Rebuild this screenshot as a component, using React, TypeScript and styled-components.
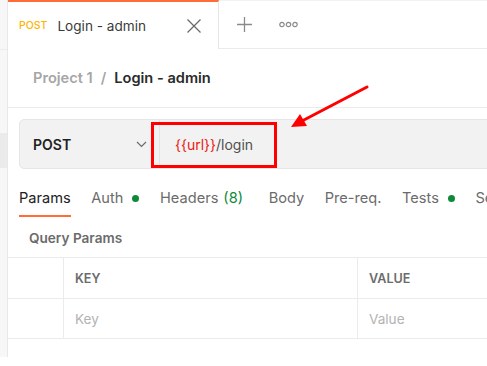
import React from "react";
import styled, { createGlobalStyle } from "styled-components";

const Global = createGlobalStyle`
  html, body { margin: 0; padding: 0; background: #ffffff; }
  body { font-family: Inter, "Noto Sans", sans-serif; overflow: hidden; width: 487px; height: 366px; }
`;

const Page = styled.div`
  position: relative;
  display: flex;
  width: 487px;
  height: 357px;
  overflow: hidden;
`;

const Sidebar = styled.div`
  width: 7px;
  flex: none;
  background: #f7f7f7;
  border-right: 1px solid #e8e8e8;
  display: flex;
  flex-direction: column;
`;

const SidebarTop = styled.div`
  height: 49px;
  border-bottom: 1px solid #ececec;
`;

const SidebarPatch = styled.div`
  margin-top: 83px;
  height: 35px;
  background: #ebebeb;
`;

const Main = styled.div`
  flex: 1;
  min-width: 0;
  display: flex;
  flex-direction: column;
  overflow: hidden;
`;

const TabBar = styled.div`
  display: flex;
  height: 49px;
  flex: none;
`;

const ActiveTab = styled.div`
  width: 211px;
  flex: none;
  display: flex;
  align-items: center;
  padding: 0 16px 0 11px;
  box-sizing: border-box;
  border-top: 2px solid #ff6c37;
  border-right: 1px solid #e6e6e6;
  background: #fff;
`;

const TabMethod = styled.span`
  color: #ffb400;
  font-size: 10.5px;
  font-weight: 500;
  margin-right: 10px;
`;

const TabTitle = styled.span`
  color: #3a3a3a;
  font-size: 13.6px;
  flex: 1;
`;

const TabRest = styled.div`
  flex: 1;
  display: flex;
  align-items: center;
  gap: 26px;
  padding-left: 17px;
  border-top: 1px solid #f2f2f2;
  border-bottom: 1px solid #ebebeb;
`;

const IconBtn = styled.span`
  display: inline-flex;
  color: #6b6b6b;
`;

const Breadcrumb = styled.div`
  height: 58px;
  flex: none;
  display: flex;
  align-items: center;
  padding-left: 25px;
  border-bottom: 1px solid #ebebeb;
  font-size: 14.6px;
  font-weight: 600;
  gap: 8px;
`;

const Crumb = styled.span<{ $muted?: boolean }>`
  color: ${(p) => (p.$muted ? "#a6a6a6" : "#2b2b2b")};
`;

const UrlRow = styled.div`
  padding: 11px 0 0 11px;
  flex: none;
`;

const UrlBar = styled.div`
  width: 520px;
  height: 48px;
  display: flex;
  align-items: center;
  background: #f2f2f2;
  border: 1px solid #e6e6e6;
  border-radius: 5px;
`;

const Method = styled.div`
  width: 140px;
  height: 100%;
  box-sizing: border-box;
  display: flex;
  align-items: center;
  justify-content: space-between;
  padding: 0 12px 0 13px;
  border-right: 1px solid #e3e3e3;
  font-size: 14px;
  font-weight: 600;
  color: #212121;
`;

const Url = styled.div`
  padding-left: 15px;
  font-size: 14px;
  color: #505050;
`;

const Var = styled.span`
  color: #eb2013;
`;

const Tabs = styled.div`
  display: flex;
  align-items: flex-start;
  gap: 20.6px;
  padding: 21px 0 0 11px;
  height: 29px;
  flex: none;
  white-space: nowrap;
`;

const Tab = styled.div<{ $active?: boolean; $wide?: boolean }>`
  font-size: 14.6px;
  color: ${(p) => (p.$active ? "#212121" : "#6b6b6b")};
  padding-bottom: 8px;
  margin-right: ${(p) => (p.$wide ? "5px" : "0")};
  border-bottom: 2px solid ${(p) => (p.$active ? "#ff6c37" : "transparent")};
  display: flex;
  align-items: center;
  gap: 9px;
  line-height: 17px;
`;

const Dot = styled.span`
  width: 7px;
  height: 7px;
  border-radius: 50%;
  background: #0c8a3a;
`;

const Count = styled.span`
  color: #0c8a3a;
  margin-left: -4px;
`;

const SectionTitle = styled.div`
  padding: 11px 0 0 21px;
  height: 27px;
  font-size: 13.6px;
  font-weight: 600;
  color: #6b6b6b;
  flex: none;
`;

const Table = styled.div`
  display: grid;
  grid-template-columns: 55px 294px 1fr;
  border-top: 1px solid #ebebeb;
  border-bottom: 1px solid #ebebeb;
`;

const Cell = styled.div<{ $head?: boolean; $first?: boolean; $last?: boolean }>`
  height: ${(p) => (p.$last ? "39px" : "41px")};
  box-sizing: border-box;
  display: flex;
  align-items: center;
  padding-left: 11px;
  border-left: ${(p) => (p.$first ? "none" : "1px solid #ebebeb")};
  border-bottom: ${(p) => (p.$last ? "none" : "1px solid #ebebeb")};
  font-size: ${(p) => (p.$head ? "12.6px" : "13.6px")};
  font-weight: ${(p) => (p.$head ? 600 : 400)};
  color: ${(p) => (p.$head ? "#6b6b6b" : "#b3b3b3")};
`;

const Highlight = styled.div`
  position: absolute;
  left: 151px;
  top: 122px;
  width: 120px;
  height: 40px;
  border: 3px solid #ff0000;
  pointer-events: none;
`;

const Arrow = styled.svg`
  position: absolute;
  left: 0;
  top: 0;
  pointer-events: none;
`;

const Close = () => (
  <svg width="16" height="16" viewBox="0 0 16 16" fill="none" stroke="currentColor" strokeWidth="1.3">
    <path d="M1.5 1.5 L14.5 14.5 M14.5 1.5 L1.5 14.5" />
  </svg>
);

const Plus = () => (
  <svg width="17" height="17" viewBox="0 0 17 17" fill="none" stroke="#8a8a8a" strokeWidth="1.3">
    <path d="M8.5 1 V16 M1 8.5 H16" />
  </svg>
);

const More = () => (
  <svg width="19" height="7" viewBox="0 0 19 7" fill="none" stroke="#8a8a8a" strokeWidth="1.2">
    <circle cx="3" cy="3.5" r="2.2" />
    <circle cx="9.5" cy="3.5" r="2.2" />
    <circle cx="16" cy="3.5" r="2.2" />
  </svg>
);

const Chevron = () => (
  <svg width="11" height="7" viewBox="0 0 11 7" fill="none" stroke="#6b6b6b" strokeWidth="1.2">
    <path d="M1 1 L5.5 5.5 L10 1" />
  </svg>
);

export default function App() {
  return (
    <>
      <Global />
      <Page>
        <Sidebar>
          <SidebarTop />
          <SidebarPatch />
        </Sidebar>
        <Main>
          <TabBar>
            <ActiveTab>
              <TabMethod>POST</TabMethod>
              <TabTitle>Login - admin</TabTitle>
              <IconBtn><Close /></IconBtn>
            </ActiveTab>
            <TabRest>
              <IconBtn><Plus /></IconBtn>
              <IconBtn><More /></IconBtn>
            </TabRest>
          </TabBar>
          <Breadcrumb>
            <Crumb $muted>Project 1</Crumb>
            <Crumb $muted>/</Crumb>
            <Crumb>Login - admin</Crumb>
          </Breadcrumb>
          <UrlRow>
            <UrlBar>
              <Method>
                POST
                <Chevron />
              </Method>
              <Url>
                <Var>{"{{url}}"}</Var>/login
              </Url>
            </UrlBar>
          </UrlRow>
          <Tabs>
            <Tab $active>Params</Tab>
            <Tab>Auth <Dot /></Tab>
            <Tab $wide>Headers <Count>(8)</Count></Tab>
            <Tab>Body</Tab>
            <Tab>Pre-req.</Tab>
            <Tab>Tests <Dot /></Tab>
            <Tab>Settings</Tab>
          </Tabs>
          <SectionTitle>Query Params</SectionTitle>
          <Table>
            <Cell $first />
            <Cell $head>KEY</Cell>
            <Cell $head>VALUE</Cell>
            <Cell $first $last />
            <Cell $last>Key</Cell>
            <Cell $last>Value</Cell>
          </Table>
        </Main>
        <Highlight />
        <Arrow width="487" height="366" viewBox="0 0 487 366">
          <path d="M367 87 L302 121" stroke="#ff0000" strokeWidth="3" strokeLinecap="round" fill="none" />
          <path d="M291 127 L300 114 L307 126 Z" fill="#ff0000" />
        </Arrow>
      </Page>
    </>
  );
}
